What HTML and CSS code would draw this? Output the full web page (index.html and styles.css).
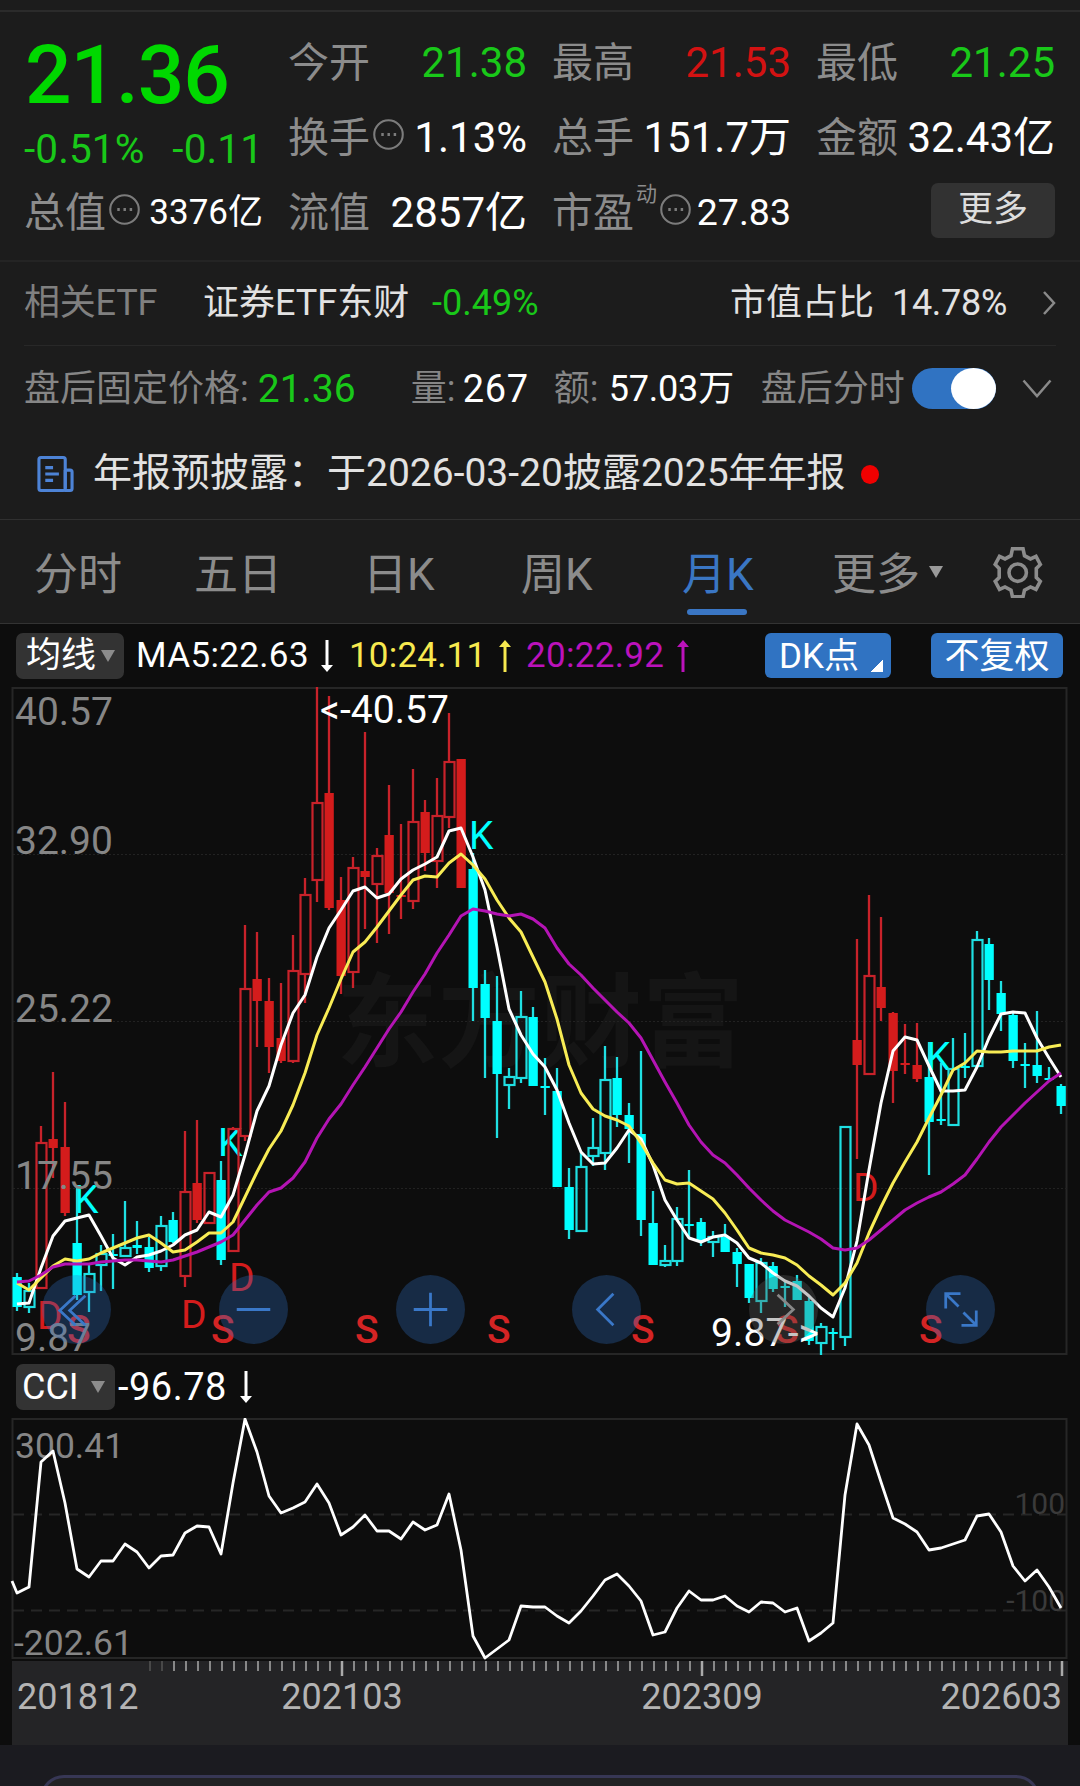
FILE: index.html
```html
<!DOCTYPE html>
<html lang="zh-CN">
<head>
  <meta charset="UTF-8">
  <title>月K</title>
  <link rel="stylesheet" href="styles.css">
</head>
<body>

<section class="quote">
  <div class="quote-main">
    <div class="price">21.36</div>
    <div class="change"><span>-0.51%</span><span>-0.11</span></div>
    <div class="cell cell-total"><span class="label">总值</span><svg class="info" viewBox="0 0 30 30"><circle cx="15" cy="15" r="13.8"/><path d="M8 15h2.4M14 15h2.4M20 15h2.4"/></svg><b class="s35">3376亿</b></div>
  </div>
  <div class="quote-grid">
    <div class="cell"><span class="label">今开</span><b class="green">21.38</b></div>
    <div class="cell"><span class="label">最高</span><b class="red">21.53</b></div>
    <div class="cell"><span class="label">最低</span><b class="green">21.25</b></div>
    <div class="cell"><span class="label">换手</span><svg class="info" viewBox="0 0 30 30"><circle cx="15" cy="15" r="13.8"/><path d="M8 15h2.4M14 15h2.4M20 15h2.4"/></svg><b>1.13%</b></div>
    <div class="cell"><span class="label">总手</span><b>151.7万</b></div>
    <div class="cell"><span class="label">金额</span><b>32.43亿</b></div>
    <div class="cell"><span class="label">流值</span><b>2857亿</b></div>
    <div class="cell"><span class="label">市盈</span><sup>动</sup><svg class="info" viewBox="0 0 30 30"><circle cx="15" cy="15" r="13.8"/><path d="M8 15h2.4M14 15h2.4M20 15h2.4"/></svg><b class="s38">27.83</b></div>
    <div class="cell"><button class="more">更多</button></div>
  </div>
</section>

<section class="etf">
  <span class="etf-label">相关ETF</span>
  <span class="etf-name">证券ETF东财</span>
  <span class="green">-0.49%</span>
  <span class="etf-ratio">市值占比</span>
  <span class="etf-pct">14.78%</span>
  <svg class="chev-right" viewBox="0 0 14 26"><path d="M2 2l10 11L2 24"/></svg>
</section>

<section class="after">
  <span class="grey">盘后固定价格:</span><span class="green after-price">21.36</span>
  <span class="grey after-vol">量:</span><span class="after-vol-n">267</span>
  <span class="grey after-amt">额:</span><span class="after-amt-n">57.03万</span>
  <span class="grey after-switch">盘后分时</span>
  <span class="toggle"><i></i></span>
  <svg class="chev-down" viewBox="0 0 30 19"><path d="M1.5 1.5L15 17 28.5 1.5"/></svg>
</section>

<section class="report">
  <svg class="doc" viewBox="0 0 38 38"><rect x="2" y="2" width="27" height="34" rx="2"/><path d="M29 15h5q2 0 2 2v17q0 2-2 2h-6M29 15v19"/><path d="M8.500 12.500h8M8.500 19h14M8.500 25.500h8"/></svg>
  <span class="report-text">年报预披露：于2026-03-20披露2025年年报</span>
  <i class="dot"></i>
</section>

<nav class="tabs">
  <span class="t1">分时</span>
  <span class="t2">五日</span>
  <span class="t3">日K</span>
  <span class="t4">周K</span>
  <span class="t5 active">月K</span>
  <span class="t6">更多</span>
  <i class="caret"></i>
  <svg class="gear" viewBox="0 0 51 51"><path d="M20.500 1.700h10.500l1.500 7 6 3.200 5.500-2.500 4.300 8-4 4v9l4 4-4.300 8-5.500-2.500-6 3.200-1.500 6.700H20.500l-1.500-6.700-6-3.200-5.500 2.500-4.300-8 4-4v-9l-4-4 4.300-8 5.500 2.500 6-3.200z"/><circle cx="25.700" cy="25.700" r="8.700"/></svg>
</nav>

<main class="board">
  <div class="ma-bar">
    <button class="pill">均线<i></i></button>
    <span class="ma5">MA5:22.63</span>
    <svg class="arrow white" viewBox="0 0 12 32"><path class="st" d="M6 0v26"/><path class="fl" d="M0 25h12l-6 7z"/></svg>
    <span class="ma10">10:24.11</span>
    <svg class="arrow yellow" viewBox="0 0 12 32"><path class="st" d="M6 6v26"/><path class="fl" d="M0 7h12L6 0z"/></svg>
    <span class="ma20">20:22.92</span>
    <svg class="arrow purple" viewBox="0 0 12 32"><path class="st" d="M6 6v26"/><path class="fl" d="M0 7h12L6 0z"/></svg>
    <button class="blue dk">DK点<i></i></button>
    <button class="blue fq">不复权</button>
  </div>

  <div class="kline">
    <svg id="kline" viewBox="0 687 1080 669"></svg>
    <div class="tools">
      <span class="tool"><svg viewBox="0 0 70 70"><path d="M34 21L18 36l16 15M44 21L28 36l16 15"/></svg></span>
      <span class="tool"><svg viewBox="0 0 70 70"><path d="M18 35h34"/></svg></span>
      <span class="tool"><svg viewBox="0 0 70 70"><path d="M18 35h34M35 18v34"/></svg></span>
      <span class="tool"><svg viewBox="0 0 70 70"><path d="M42 19L26 35l16 16"/></svg></span>
      <span class="tool off"><svg viewBox="0 0 70 70"><path d="M29 20l16 15-16 15"/></svg></span>
      <span class="tool"><svg viewBox="0 0 70 70"><path d="M20 34V19h15M21 20l12 12M51 36v15H36M50 50L38 38"/></svg></span>
    </div>
  </div>

  <div class="cci-bar">
    <button class="pill">CCI<i></i></button>
    <span>-96.78</span>
    <svg class="arrow white" viewBox="0 0 12 32"><path class="st" d="M6 0v26"/><path class="fl" d="M0 25h12l-6 7z"/></svg>
  </div>
  <svg id="cci" viewBox="0 1418 1080 242"></svg>
  <svg id="axis" viewBox="0 1660 1080 85"></svg>
</main>

<footer class="bottom"><div class="sheet"></div></footer>

<script src="chart.js"></script>
</body>
</html>
```
FILE: styles.css
```css
* { box-sizing: border-box; }
body {
  margin: 0;
  width: 1080px;
  height: 1786px;
  overflow: hidden;
  background: #1c1c1c;
  color: #fff;
  font-family: Roboto, "Noto Sans CJK SC", sans-serif;
  font-size: 36px;
  white-space: nowrap;
}
svg { display: block; fill: none; flex: none; }
button { border: none; padding: 0; margin: 0; font-family: inherit; color: #fff; }
b { font-weight: 400; }
.green { color: #19c819; }
.red { color: #d31212; }
.grey { color: #868686; }

.quote {
  display: flex;
  gap: 26px;
  height: 262px;
  padding: 25px 25px 0;
  border-bottom: 2px solid #242424;
  background: linear-gradient(#2b2b2b, #2b2b2b) 0 10px / 100% 2px no-repeat;
}
.quote-main { width: 238px; }
.price {
  height: 97px;
  line-height: 100px;
  font-size: 82px;
  font-weight: 500;
  letter-spacing: -1.1px;
  color: #00d800;
}
.change {
  display: flex;
  justify-content: space-between;
  height: 53px;
  line-height: 55px;
  font-size: 40.5px;
  letter-spacing: 0.1px;
  color: #19c819;
}
.change span:first-child { margin-left: -1px; }
.quote-grid {
  display: grid;
  grid-template-columns: repeat(3, 238px);
  grid-auto-rows: 75px;
  column-gap: 26px;
}
.cell { display: flex; align-items: center; height: 75px; line-height: 75px; font-size: 42px; }
.cell b { margin-left: auto; }
.cell .label { height: 73px; margin-left: -1px; font-size: 41px; color: #8c8c8c; }
.cell .s35 { font-size: 35px; }
.cell .s38 { font-size: 37.5px; }
.cell sup { align-self: flex-start; margin: 7px 0 0 2px; line-height: 24px; font-size: 21px; color: #8c8c8c; }
.info { width: 31px; height: 31px; margin: 0 0 6px 3px; stroke: #7c7c7c; stroke-width: 2; }
.info path { stroke-width: 3; }
.more {
  width: 124px;
  height: 55px;
  margin: -5px 0 0 auto;
  border-radius: 7px;
  background: #323232;
  color: #ddd;
  font-size: 35px;
  line-height: 54px;
}

.etf {
  display: flex;
  align-items: center;
  height: 84px;
  margin: 0 24px;
  border-bottom: 1px solid #282828;
  line-height: 80px;
  color: #e2e2e2;
}
.etf span { height: 82px; }
.etf-label { width: 179px; color: #808080; letter-spacing: -0.2px; }
.etf-name { width: 229px; }
.etf .green { width: 298px; }
.etf-ratio { width: 162px; }
.etf-pct { width: 150px; letter-spacing: -0.3px; }
.chev-right { width: 14px; height: 26px; margin-bottom: 2px; stroke: #8a8a8a; stroke-width: 2.5; }

.after { display: flex; align-items: center; height: 87px; padding: 0 24px 3px; line-height: 88px; }
.after span:not(.toggle) { height: 86px; }
.after-price { width: 153px; margin-left: 9px; font-size: 39px; }
.after-vol { width: 52px; }
.after-vol-n { width: 91px; font-size: 38px; letter-spacing: 0.7px; }
.after-amt { width: 55px; }
.after-amt-n { width: 152px; letter-spacing: -0.2px; }
.after-switch { width: 151px; }
.toggle { display: flex; justify-content: flex-end; width: 84px; height: 41px; border-radius: 21px; background: #3073c2; }
.toggle i { width: 45px; height: 41px; border-radius: 50%; background: #fff; }
.chev-down { width: 30px; height: 19px; margin-left: 26px; stroke: #8a8a8a; stroke-width: 2.5; }

.report { display: flex; align-items: center; height: 87px; padding: 0 0 4px 37px; border-bottom: 1px solid #303030; }
.doc { width: 37px; height: 38px; margin-bottom: 1px; stroke: #4d83d6; stroke-width: 3.2; }
.report-text { height: 76px; margin-left: 19px; line-height: 74px; font-size: 39px; color: #e2e2e2; }
.dot { width: 18px; height: 19px; margin-left: 15px; border-radius: 50%; background: #f00000; }

.tabs { display: flex; align-items: center; height: 104px; padding: 1px 0 0 34px; border-bottom: 1px solid #333; font-size: 44px; color: #8c8c8c; }
.tabs span { height: 103px; line-height: 108px; }
.t1 { width: 160px; }
.t2 { width: 169px; }
.t3 { width: 158px; }
.t4 { width: 161px; }
.t5 { width: 150px; }
.t6 { width: 97px; }
.tabs .active { position: relative; color: #3a76c4; }
.active::after { content: ""; position: absolute; left: 5px; top: 88px; width: 60px; height: 6px; border-radius: 3px; background: #3a76c4; }
.caret { border: solid transparent; border-width: 12px 7.5px 0; border-top-color: #9a9a9a; }
.gear { width: 51px; height: 51px; margin-left: 49px; stroke: #8c8c8c; stroke-width: 3.6; }

.board { height: 1121px; background: #0d0d0d; }
.ma-bar { display: flex; align-items: center; height: 63px; padding: 0 16px; line-height: 64px; font-size: 35px; }
.pill { display: flex; align-items: center; width: 108px; height: 46px; padding-left: 10px; border-radius: 7px; background: #333; font-size: 35px; line-height: 48px; }
.pill i { margin-left: 5px; border: solid transparent; border-width: 12px 7.5px 0; border-top-color: #8c8c8c; }
.ma5 { width: 185px; margin-left: 12px; letter-spacing: 0.35px; }
.arrow { width: 12px; height: 32px; }
.arrow .st { stroke: currentColor; stroke-width: 3; }
.arrow .fl { fill: currentColor; }
.white { color: #fff; }
.ma10, .yellow { color: #f7e94f; }
.ma20, .purple { color: #bb12bb; }
.ma10 { width: 150px; margin-left: 16px; letter-spacing: 0.2px; }
.ma20 { width: 151px; margin-left: 15px; letter-spacing: 0.3px; }
.blue { height: 45px; border-radius: 6px; background: #3073c2; font-size: 35px; line-height: 47px; }
.dk { display: flex; width: 126px; margin-left: 76px; padding-left: 14px; }
.dk i { align-self: flex-end; width: 12px; height: 12px; margin: 0 0 6px 12px; background: linear-gradient(135deg, transparent 50%, #fff 50%); }
.fq { width: 132px; margin-left: 40px; }

.kline { position: relative; height: 669px; }
#kline { width: 1080px; height: 669px; }
.tools { position: absolute; left: 42px; top: 588px; display: flex; gap: 107.800px; }
.tool { width: 69px; height: 69px; border-radius: 50%; background: rgba(48, 112, 200, 0.3); }
.tool svg { width: 69px; height: 69px; stroke: #3a78c8; stroke-width: 2.8; }
.tool.off { background: rgba(90, 90, 90, 0.35); }
.tool.off svg { stroke: #888; }

.cci-bar { display: flex; align-items: center; height: 62px; padding: 0 16px 0; font-size: 38px; line-height: 62px; }
.cci-bar .pill { width: 99px; padding-left: 6px; font-size: 36px; }
.cci-bar .pill i { margin-left: 12px; }
.cci-bar span { width: 122px; margin-left: 3px; letter-spacing: 0.5px; }
#cci { width: 1080px; height: 242px; }
#axis { width: 1080px; height: 85px; }

.mark { font-size: 39px; }
.scale { font-size: 39px; fill: #868686; }
.scale2 { font-size: 35.5px; fill: #868686; }
.date { font-size: 36px; fill: #b4b4b4; }
.wm { font-size: 102px; font-weight: 700; fill: #151515; }

.bottom { height: 41px; padding: 30px 40px 0; background: #1b1b20; }
.sheet { height: 40px; border: 3px solid #373755; border-bottom: none; border-radius: 24px 24px 0 0; background: #222224; }
```
FILE: chart.js
```js
// one entry per month: colour, hollow(0)/filled(1), high, top, bottom, low
const candles = `
c1 1273 1277 1307 1311|c0 1283 1291 1307 1313|r0 1126 1143 1288 1288|r1 1072 1139 1148 1178|r1 1102 1147 1213 1216
c1 1187 1243 1295 1300|c0 1263 1274 1292 1312|c0 1245 1254 1265 1291|c1 1234 1254 1256 1289|c0 1201 1248 1256 1256
c1 1221 1245 1248 1254|c1 1237 1247 1268 1272|c0 1216 1226 1266 1271|c1 1212 1220 1242 1243|r0 1131 1192 1276 1287
r1 1120 1183 1220 1223|r0 1173 1173 1223 1223|c1 1161 1180 1260 1265|r0 1127 1129 1251 1251|r0 925 989 1136 1141
r1 932 979 1001 1047|r1 978 1001 1047 1073|r1 983 1038 1061 1063|r0 935 971 1061 1063|r0 878 895 974 1003
r0 687 803 880 902|r1 696 793 908 910|r1 877 900 976 994|r0 857 868 972 988|r1 732 871 877 929
r0 848 856 884 943|r1 785 835 893 934|r1 824 895 897 919|r0 769 822 901 909|r1 800 812 853 871
r0 778 816 861 888|r0 713 762 817 828|r1 759 759 888 888|c1 853 869 988 1021|c1 970 984 1018 1078
c1 976 1021 1074 1138|c0 1068 1077 1085 1109|c0 991 1017 1078 1083|c1 1007 1017 1086 1086|c1 1058 1086 1088 1115
c1 1068 1091 1187 1187|c1 1168 1187 1230 1239|c0 1152 1167 1231 1232|c0 1118 1148 1156 1166|c0 1046 1080 1153 1170
c1 1057 1078 1115 1127|c1 1103 1115 1129 1163|c1 1051 1134 1220 1236|c1 1191 1223 1265 1265|c0 1245 1261 1265 1267
c0 1207 1219 1261 1266|c1 1170 1224 1226 1238|c1 1218 1222 1241 1246|c0 1231 1237 1242 1257|c1 1224 1237 1252 1252
c1 1248 1252 1264 1287|c1 1264 1264 1298 1303|c0 1258 1263 1301 1313|c1 1262 1266 1289 1292|c1 1280 1286 1288 1307
c1 1275 1281 1300 1300|c1 1295 1301 1341 1345|c0 1323 1327 1343 1355|c1 1328 1332 1334 1350|c0 1127 1127 1337 1346
r1 939 1040 1065 1159|r0 895 976 1074 1074|r1 917 987 1008 1021|r1 1012 1013 1071 1103|r1 1024 1063 1065 1074
r1 1023 1065 1079 1082|c1 1042 1077 1122 1175|c1 1063 1119 1121 1125|c0 1038 1069 1125 1125|c1 1033 1066 1068 1078
c0 931 940 1066 1066|c1 938 944 980 1010|c1 981 993 1014 1031|c1 1013 1015 1061 1068|c1 1043 1064 1066 1088
c1 1011 1065 1076 1083|c1 1067 1078 1080 1081|c1 1084 1086 1106 1114`.trim().split(/[|\n]/);

const ma5 = [1304,1303,1268,1236,1221,1218,1215,1236,1258,1265,1257,1255,1251,1245,1235,1230,1212,1217,1195,1155,1111,1086,1045,1013,995,957,928,910,891,887,898,894,879,870,864,857,831,828,857,890,947,1009,1035,1054,1067,1090,1123,1152,1164,1163,1148,1130,1139,1165,1200,1220,1238,1242,1237,1235,1243,1258,1263,1273,1281,1286,1296,1308,1317,1288,1241,1170,1103,1051,1037,1040,1066,1091,1091,1090,1067,1038,1014,1012,1013,1038,1058,1077];
const ma10 = [1283,1290,1278,1266,1259,1261,1259,1253,1248,1243,1238,1235,1243,1252,1250,1242,1233,1233,1222,1197,1172,1149,1131,1105,1073,1035,1008,979,952,942,927,911,895,880,876,877,863,854,865,879,900,918,932,957,982,1019,1065,1093,1109,1116,1120,1126,1143,1163,1180,1184,1183,1191,1199,1213,1230,1248,1253,1255,1258,1265,1276,1285,1295,1283,1263,1233,1207,1183,1162,1142,1118,1095,1070,1063,1051,1052,1052,1051,1051,1051,1047,1045];
const ma20 = [1282,1281,1275,1267,1264,1264,1264,1262,1261,1260,1260,1261,1262,1260,1256,1252,1247,1242,1235,1220,1205,1192,1188,1178,1162,1138,1119,1104,1085,1067,1048,1029,1012,992,974,953,935,916,909,911,914,916,914,919,928,948,964,975,988,1000,1012,1023,1038,1060,1082,1103,1125,1142,1155,1163,1175,1188,1200,1211,1220,1226,1232,1239,1248,1250,1248,1240,1230,1220,1210,1203,1197,1192,1184,1175,1159,1142,1127,1115,1103,1092,1081,1073];
const cci = [1593,1587,1462,1451,1503,1569,1577,1561,1561,1544,1552,1568,1556,1555,1533,1526,1527,1554,1483,1419,1452,1496,1513,1508,1502,1484,1503,1535,1527,1515,1531,1531,1539,1522,1530,1525,1494,1550,1636,1658,1649,1640,1606,1607,1607,1616,1623,1611,1596,1580,1574,1586,1601,1635,1632,1608,1591,1600,1600,1596,1606,1612,1602,1603,1612,1608,1641,1633,1623,1495,1424,1445,1482,1518,1524,1532,1550,1548,1544,1540,1516,1514,1532,1566,1581,1570,1587,1608];

const px = i => 17 + 12 * i;
const text = (x, y, s, cls, fill, extra = '') => `<text x="${x}" y="${y}" class="${cls}" ${fill ? `fill="${fill}"` : ''} ${extra}>${s}</text>`;
const line = (data, color, w, pre = '') =>
  `<polyline points="${pre}${data.map((y, i) => px(i) + ',' + y).join(' ')}" stroke="${color}" stroke-width="${w}" stroke-linejoin="round"/>`;

const CYAN = '#00ffff', RED = '#d41c1c';
let s = text(336, 1059, '东方财富', 'wm');
s += '<path d="M12.500 688h1054v666h-1054z" stroke="#262626" stroke-width="2"/>';
for (const y of [854, 1021, 1188]) s += `<path d="M13 ${y}.5H1067" stroke="#222" stroke-dasharray="2 2"/>`;
for (const [x, y] of [[469, 849], [74, 1213], [218, 1156], [926, 1070]]) s += text(x, y, 'K', 'mark', CYAN);
for (const [x, y] of [[37, 1329], [181, 1328], [229, 1291], [853, 1201]]) s += text(x, y, 'D', 'mark', RED);
for (const x of [67, 211, 355, 487, 631, 775, 919]) s += text(x, 1343, 'S', 'mark', '#d42424', 'font-weight="500"');

candles.forEach((row, i) => {
  const [kind, h, t, b, l] = row.split(' ').map((v, k) => k ? +v : v);
  const x = px(i), red = kind[0] === 'r', col = red ? RED : CYAN;
  const thin = red ? '#c8222a' : '#1fdfe2';
  if (kind[1] === '1') {
    s += `<path d="M${x} ${h}V${l}" stroke="${thin}" stroke-width="2.3"/><rect x="${x - 4.5}" y="${t}" width="9.3" height="${b - t}" fill="${col}"/>`;
  } else {
    s += `<path d="M${x} ${h}V${t}M${x} ${b}V${l}" stroke="${thin}" stroke-width="2.3"/><rect x="${x - 4.5}" y="${t}" width="10" height="${b - t}" stroke="${thin}" stroke-width="2.2"/>`;
  }
});
s += line(ma5, '#fff', 3) + line(ma10, '#f8ec55', 3) + line(ma20, '#b414b4', 3);
[['40.57', 725], ['32.90', 854], ['25.22', 1022], ['17.55', 1189], ['9.87', 1351]].forEach(([t, y]) => s += text(15, y, t, 'scale'));
s += text(320, 723, '&lt;-40.57', 'mark', '#fff', 'textLength="129"');
s += text(711, 1346, '9.87-&gt;', 'mark', '#fff', 'textLength="108"');
document.getElementById('kline').innerHTML = s;

s = '<path d="M12.500 1419h1054v239h-1054z" stroke="#262626" stroke-width="2"/>';
s += '<path d="M13 1514.500H1067M13 1610.500H1067" stroke="#262626" stroke-width="2" stroke-dasharray="11 7"/>';
s += text(1065, 1514, '100', '', '#3a3a3a', 'text-anchor="end" font-size="30"') + text(1065, 1611, '-100', '', '#3a3a3a', 'text-anchor="end" font-size="30"');
s += text(15, 1458, '300.41', 'scale2') + text(14, 1655, '-202.61', 'scale2');
s += line(cci, '#fff', 2.8, '12,1581 ');
document.getElementById('cci').innerHTML = s;

s = '<rect x="12" y="1661" width="1056" height="84" fill="#242426"/>';
for (let i = 11; i < 88; i++) {
  const major = i === 27 || i === 57 || i === 87;
  s += `<path d="M${px(i) + 1} 1661V${major ? 1676 : 1671}" stroke="${i < 13 ? '#555' : '#aaa'}" stroke-width="${major ? 2.5 : 1.5}"/>`;
}
s += text(17, 1709, '201812', 'date') + text(342, 1709, '202103', 'date', '', 'text-anchor="middle"');
s += text(702, 1709, '202309', 'date', '', 'text-anchor="middle"') + text(1062, 1709, '202603', 'date', '', 'text-anchor="end"');
document.getElementById('axis').innerHTML = s;
```
